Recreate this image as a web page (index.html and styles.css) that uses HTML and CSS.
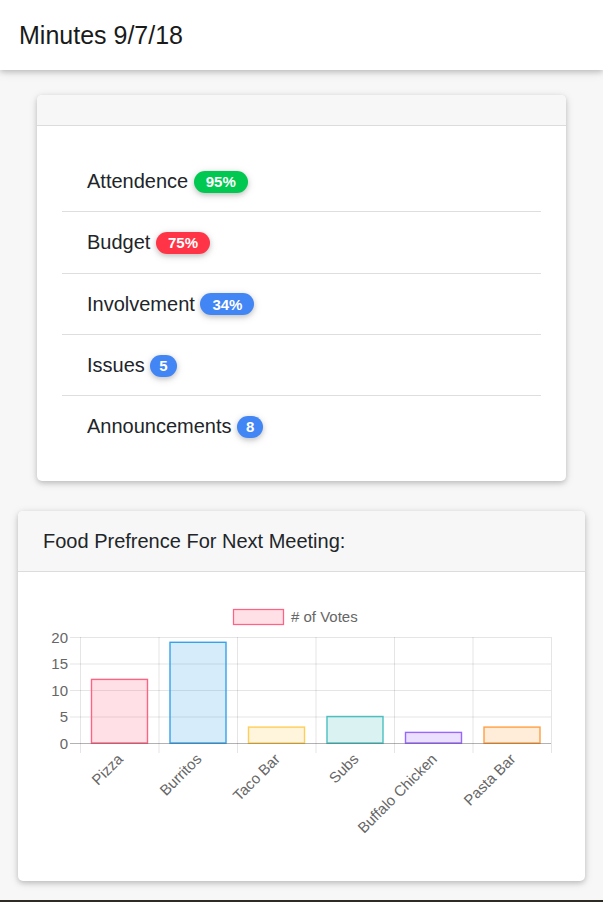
FILE: index.html
```html
<!DOCTYPE html>
<html lang="en">
<head>
<meta charset="utf-8">
<title>Minutes 9/7/18</title>
<link rel="stylesheet" href="styles.css">
</head>
<body>
<header class="topbar">
  <h1 class="topbar-title">Minutes 9/7/18</h1>
</header>
<main class="content">
  <section class="card card-summary">
    <div class="card-header card-header-empty"></div>
    <div class="card-body card-body-list">
      <ul class="list">
        <li class="list-item">Attendence <span class="badge badge-pct badge-green">95%</span></li>
        <li class="list-item">Budget <span class="badge badge-pct badge-red">75%</span></li>
        <li class="list-item">Involvement <span class="badge badge-pct badge-blue">34%</span></li>
        <li class="list-item">Issues <span class="badge badge-num badge-blue">5</span></li>
        <li class="list-item">Announcements <span class="badge badge-num badge-blue">8</span></li>
      </ul>
    </div>
  </section>

  <section class="card card-chart">
    <div class="card-header">Food Prefrence For Next Meeting:</div>
    <div class="card-body card-body-chart">
      <svg class="chart" width="516" height="258" viewBox="0 0 516 258" xmlns="http://www.w3.org/2000/svg">
        <!-- legend -->
        <rect x="190.5" y="12.5" width="50" height="15" fill="rgba(255,99,132,0.2)" stroke="rgb(255,99,132)" stroke-width="1.25"/>
        <text class="chart-text" x="248" y="25"># of Votes</text>
        <!-- grid -->
        <g stroke="rgba(0,0,0,0.1)" stroke-width="1">
          <line x1="27" y1="40.5" x2="508" y2="40.5"/>
          <line x1="27" y1="67" x2="508" y2="67"/>
          <line x1="27" y1="93.5" x2="508" y2="93.5"/>
          <line x1="27" y1="120" x2="508" y2="120"/>
          <line x1="37.5" y1="40" x2="37.5" y2="156"/>
          <line x1="116" y1="40" x2="116" y2="156"/>
          <line x1="194.5" y1="40" x2="194.5" y2="156"/>
          <line x1="273" y1="40" x2="273" y2="156"/>
          <line x1="351.5" y1="40" x2="351.5" y2="156"/>
          <line x1="430" y1="40" x2="430" y2="156"/>
          <line x1="508.5" y1="40" x2="508.5" y2="156"/>
        </g>
        <!-- bars -->
        <rect x="48.5" y="82.4" width="56" height="63.6" fill="rgba(255,99,132,0.2)" stroke="rgb(255,99,132)" stroke-width="1.4"/>
        <rect x="127" y="45.3" width="56" height="100.7" fill="rgba(54,162,235,0.2)" stroke="rgb(54,162,235)" stroke-width="1.4"/>
        <rect x="205.5" y="130.1" width="56" height="15.9" fill="rgba(255,206,86,0.2)" stroke="rgb(255,206,86)" stroke-width="1.4"/>
        <rect x="284" y="119.5" width="56" height="26.5" fill="rgba(75,192,192,0.2)" stroke="rgb(75,192,192)" stroke-width="1.4"/>
        <rect x="362.5" y="135.4" width="56" height="10.6" fill="rgba(153,102,255,0.2)" stroke="rgb(153,102,255)" stroke-width="1.4"/>
        <rect x="441" y="130.1" width="56" height="15.9" fill="rgba(255,159,64,0.2)" stroke="rgb(255,159,64)" stroke-width="1.4"/>
        <!-- zero line -->
        <line x1="27" y1="146.5" x2="508" y2="146.5" stroke="rgba(0,0,0,0.3)" stroke-width="1"/>
        <!-- y labels -->
        <g class="chart-text" text-anchor="end">
          <text x="25" y="45.5">20</text>
          <text x="25" y="72">15</text>
          <text x="25" y="98.5">10</text>
          <text x="25" y="125">5</text>
          <text x="25" y="151.5">0</text>
        </g>
        <!-- x labels -->
        <g class="chart-text" text-anchor="end">
          <text x="81" y="163" transform="rotate(-45 81 163)">Pizza</text>
          <text x="159.5" y="163" transform="rotate(-45 159.5 163)">Burritos</text>
          <text x="238" y="163" transform="rotate(-45 238 163)">Taco Bar</text>
          <text x="316.5" y="163" transform="rotate(-45 316.5 163)">Subs</text>
          <text x="395" y="163" transform="rotate(-45 395 163)">Buffalo Chicken</text>
          <text x="473.5" y="163" transform="rotate(-45 473.5 163)">Pasta Bar</text>
        </g>
      </svg>
    </div>
  </section>
</main>
<footer class="footer"></footer>
</body>
</html>
```
FILE: styles.css
```css
html, body {
  margin: 0;
  padding: 0;
}
body {
  background: #f7f7f7;
  font-family: "Liberation Sans", Arial, sans-serif;
  color: #212529;
}
.topbar {
  height: 70px;
  background: #fff;
  display: flex;
  align-items: center;
  padding: 0 19px;
  box-shadow: 0 2px 5px 0 rgba(0,0,0,.16), 0 2px 10px 0 rgba(0,0,0,.12);
  position: relative;
  z-index: 1;
}
.topbar-title {
  margin: 0;
  font-size: 25px;
  font-weight: 400;
  line-height: 30px;
  color: #1a1a1a;
}
.content {
  padding: 25px 18px 19px;
  display: flex;
  flex-direction: column;
  gap: 30px;
}
.card {
  background: #fff;
  border-radius: 5px;
  box-shadow: 0 2px 5px 0 rgba(0,0,0,.16), 0 2px 10px 0 rgba(0,0,0,.12);
  overflow: hidden;
}
.card-summary {
  margin: 0 19px;
}
.card-header {
  background: #f7f7f7;
  border-bottom: 1px solid #dcdcdc;
  padding: 15px 25px;
  font-size: 20px;
  line-height: 30px;
}
.card-header-empty {
  height: 0;
}
.card-body {
  padding: 25px;
}
.card-body-list {
  padding-bottom: 24px;
}
.card-body-chart {
  padding-bottom: 26px;
}
.list {
  list-style: none;
  margin: 0;
  padding: 0;
}
.list-item {
  padding: 15.17px 25px;
  font-size: 20px;
  line-height: 30px;
  border-top: 1px solid #dedede;
}
.list-item:first-child {
  border-top: none;
}
.badge {
  display: inline-block;
  font-size: 15px;
  font-weight: 700;
  line-height: 15px;
  padding: 3.5px 12px;
  border-radius: 20px;
  color: #fff;
  vertical-align: 1px;
  box-shadow: 0 2px 5px 0 rgba(0,0,0,.16), 0 2px 10px 0 rgba(0,0,0,.12);
}
.badge-num {
  padding: 3.5px 9px;
}
.badge-green { background: #00c851; }
.badge-red { background: #ff3547; }
.badge-blue { background: #4285f4; }
.chart {
  display: block;
}
.chart-text {
  font-family: "Liberation Sans", Arial, sans-serif;
  font-size: 15px;
  fill: #666;
}
.footer {
  height: 40px;
  background: #2e2b24;
}
```
